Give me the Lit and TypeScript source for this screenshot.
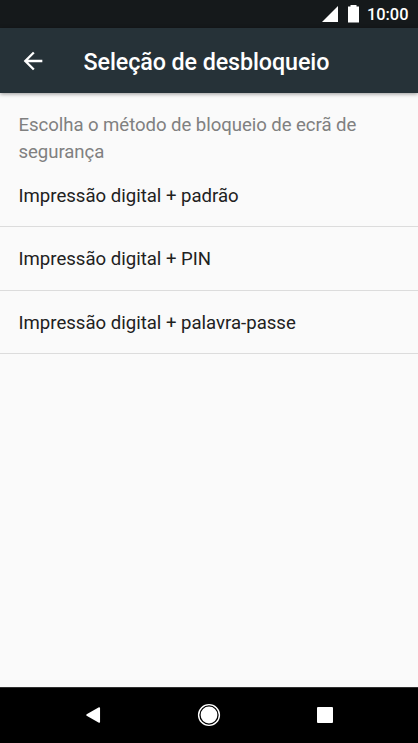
import { LitElement, html, css } from "lit";
import { customElement } from "lit/decorators.js";

@customElement("app-root")
class AppRoot extends LitElement {
  static styles = css`
    :host { display: flex; flex-direction: column; height: 743px; background: #fafafa; font-family: Roboto, sans-serif; color: #212121; overflow: hidden; }
    svg { display: block; }
    .status { box-sizing: border-box; height: 28px; flex: none; background: #15191b; color: #fff; display: flex; justify-content: flex-end; align-items: center; padding: 1px 9.5px 0 0; font-size: 16.4px; font-weight: 500; }
    .status svg { margin-top: -1px; }
    .bar { height: 65px; flex: none; background: #263238; color: #fff; display: flex; align-items: center; box-shadow: 0 1px 4px rgba(0,0,0,.4); }
    .back { margin: 0 0 0 18.5px; }
    h1 { margin: 2px 0 0 37px; font-size: 23.3px; letter-spacing: -.09px; font-weight: 500; white-space: nowrap; }
    main { flex: 1; }
    .hint { margin: 0; padding: 19px 18.5px 0; height: 54px; font-size: 18.6px; letter-spacing: -.06px; line-height: 27px; color: #808080; white-space: nowrap; }
    .row { box-sizing: border-box; height: 63.5px; padding: 2px 18.5px 0; display: flex; align-items: center; font-size: 18.6px; letter-spacing: -.01px; border-bottom: 1px solid #dcdcdc; white-space: nowrap; }
    .row:first-of-type { height: 61px; padding-top: 0; }
    nav { height: 56px; flex: none; background: #000; }
  `;
  render() {
    return html`
      <div class="status">
        <svg width="46" height="28" viewBox="0 0 46 28" fill="#fff"><path d="M1 22H17V6Z"/><path d="M27 6.5h2.5V5h6v1.5H38V22.5H27Z"/></svg>
        <span>10:00</span>
      </div>
      <header class="bar">
        <svg class="back" width="28" height="28" viewBox="0 0 24 24" fill="#fff"><path d="M20 11H7.83l5.59-5.59L12 4l-8 8 8 8 1.41-1.41L7.83 13H20v-2z"/></svg>
        <h1>Seleção de desbloqueio</h1>
      </header>
      <main>
        <p class="hint">Escolha o método de bloqueio de ecrã de<br>segurança</p>
        <div class="row">Impressão digital + padrão</div>
        <div class="row">Impressão digital + PIN</div>
        <div class="row">Impressão digital + palavra-passe</div>
      </main>
      <nav>
        <svg width="418" height="56" viewBox="0 0 418 56" fill="#fff"><path d="M0 0H418V1H0Z" fill="#303030"/><path d="M87 28L99.3 21V35Z" stroke="#fff" stroke-width="1.5" stroke-linejoin="round"/><circle cx="209" cy="28" r="8.4"/><circle cx="209" cy="28" r="10.4" fill="none" stroke="#fff" stroke-width="1.4"/><rect x="317" y="20" width="16" height="16" rx="1"/></svg>
      </nav>`;
  }
}
